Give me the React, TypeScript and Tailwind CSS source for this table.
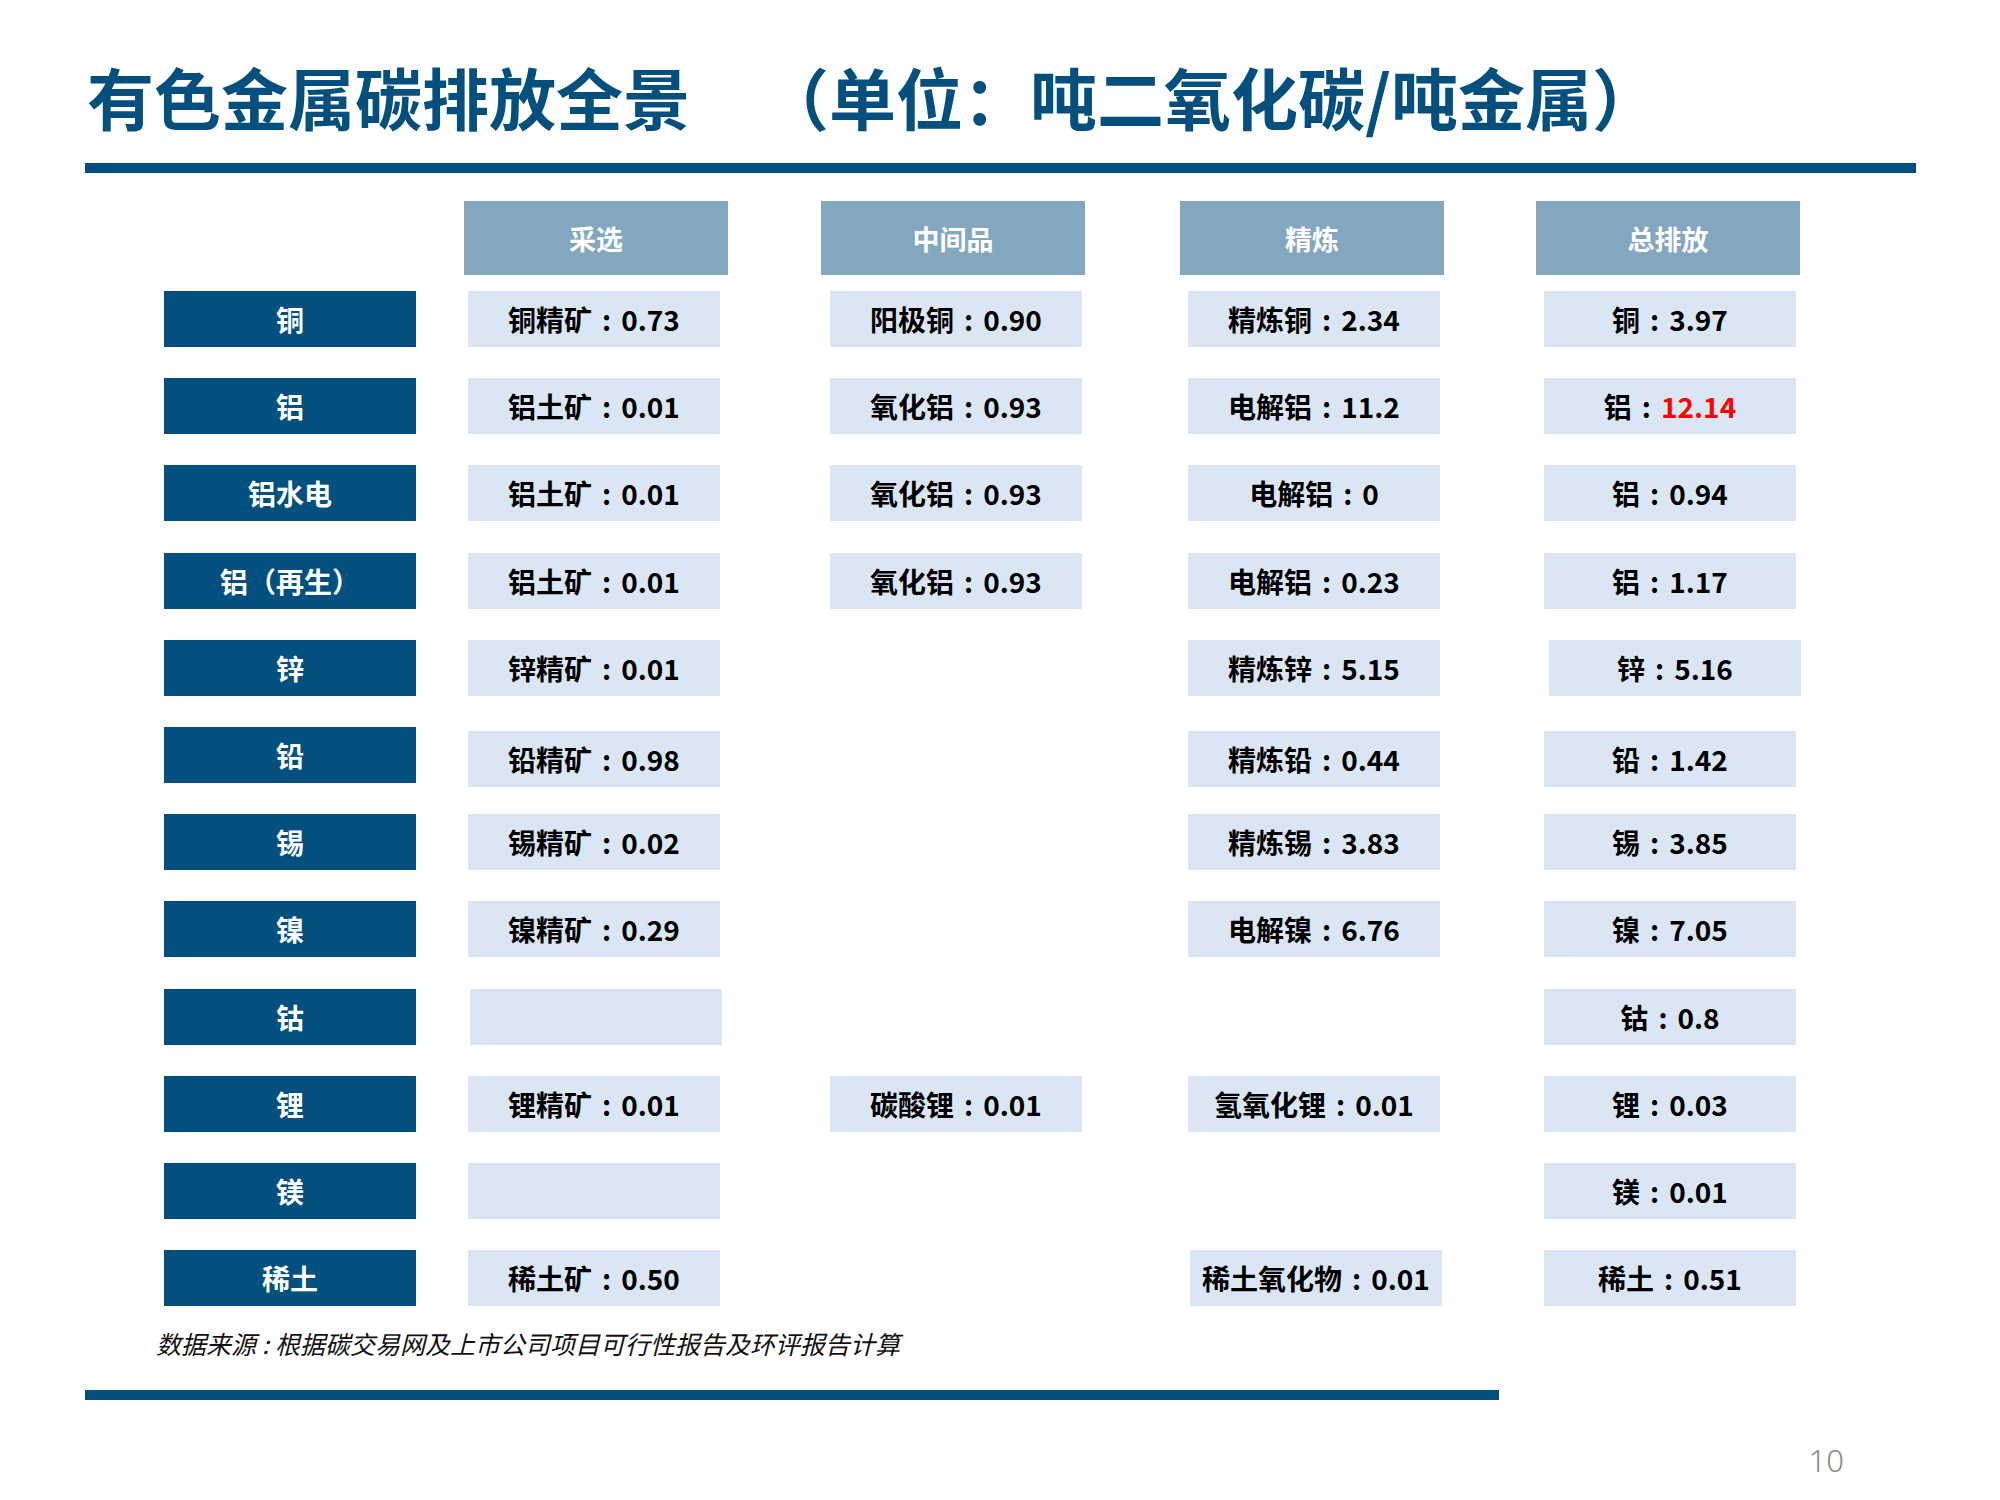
import React from "react";
import clsx from "clsx";

type Item = { k: string; v: string; red?: boolean; empty?: boolean; cls?: string } | null;

type Row = {
  name: string;
  cells: [Item, Item, Item, Item];
  rowCls?: string;
};

const ROWS: Row[] = [
  {
    name: "铜",
    cells: [
      { k: "铜精矿", v: "0.73" },
      { k: "阳极铜", v: "0.90" },
      { k: "精炼铜", v: "2.34" },
      { k: "铜", v: "3.97" },
    ],
  },
  {
    name: "铝",
    cells: [
      { k: "铝土矿", v: "0.01" },
      { k: "氧化铝", v: "0.93" },
      { k: "电解铝", v: "11.2" },
      { k: "铝", v: "12.14", red: true },
    ],
  },
  {
    name: "铝水电",
    cells: [
      { k: "铝土矿", v: "0.01" },
      { k: "氧化铝", v: "0.93" },
      { k: "电解铝", v: "0" },
      { k: "铝", v: "0.94" },
    ],
  },
  {
    name: "铝（再生）",
    cells: [
      { k: "铝土矿", v: "0.01" },
      { k: "氧化铝", v: "0.93" },
      { k: "电解铝", v: "0.23" },
      { k: "铝", v: "1.17" },
    ],
  },
  {
    name: "锌",
    cells: [
      { k: "锌精矿", v: "0.01" },
      null,
      { k: "精炼锌", v: "5.15" },
      { k: "锌", v: "5.16", cls: "ml-[109px]" },
    ],
  },
  {
    name: "铅",
    rowCls: "mt-[4px]",
    cells: [
      { k: "铅精矿", v: "0.98" },
      null,
      { k: "精炼铅", v: "0.44" },
      { k: "铅", v: "1.42" },
    ],
  },
  {
    name: "锡",
    cells: [
      { k: "锡精矿", v: "0.02" },
      null,
      { k: "精炼锡", v: "3.83" },
      { k: "锡", v: "3.85" },
    ],
  },
  {
    name: "镍",
    cells: [
      { k: "镍精矿", v: "0.29" },
      null,
      { k: "电解镍", v: "6.76" },
      { k: "镍", v: "7.05" },
    ],
  },
  {
    name: "钴",
    cells: [
      { k: "", v: "", empty: true, cls: "ml-[54px]" },
      null,
      null,
      { k: "钴", v: "0.8", cls: "ml-[102px]" },
    ],
  },
  {
    name: "锂",
    cells: [
      { k: "锂精矿", v: "0.01" },
      { k: "碳酸锂", v: "0.01" },
      { k: "氢氧化锂", v: "0.01" },
      { k: "锂", v: "0.03" },
    ],
  },
  {
    name: "镁",
    cells: [{ k: "", v: "", empty: true }, null, null, { k: "镁", v: "0.01" }],
  },
  {
    name: "稀土",
    cells: [
      { k: "稀土矿", v: "0.50" },
      null,
      { k: "稀土氧化物", v: "0.01", cls: "ml-[108px]" },
      { k: "稀土", v: "0.51", cls: "ml-[102px]" },
    ],
  },
];

// left margin of each data column, measured from the end of the previous box
const GAPS = ["ml-[52px]", "ml-[110px]", "ml-[106px]", "ml-[104px]"];
const HEADERS = ["采选", "中间品", "精炼", "总排放"];
const HEADER_GAPS = ["ml-0", "ml-[93px]", "ml-[95px]", "ml-[92px]"];

function Cell({ item, col, rowCls }: { item: Item; col: number; rowCls?: string }) {
  if (item === null) {
    return <div className={clsx(GAPS[col], "w-[252px] shrink-0")} />;
  }
  if (item.empty) {
    return (
      <div
        className={clsx(item.cls || GAPS[col], "w-[252px] h-[56px] shrink-0 bg-[#dae6f4]", rowCls)}
      />
    );
  }
  return (
    <div
      className={clsx(
        item.cls || GAPS[col],
        "flex w-[252px] h-[56px] shrink-0 items-center justify-center bg-[#dae6f4]",
        "text-[28px] font-bold leading-none text-black",
        rowCls
      )}
    >
      <span>{item.k}</span>
      <span className="mx-[10px]">:</span>
      <span className={clsx(item.red && "text-[#ff0000]")}>{item.v}</span>
    </div>
  );
}

export default function App() {
  return (
    <div className="w-[2000px] h-[1500px] bg-white font-['Noto_Sans_CJK_SC',sans-serif] overflow-hidden">
      <div className="pt-[62px] pl-[87px] h-[128px]">
        <h1 className="text-[67px] font-bold leading-none text-[#03507f] whitespace-nowrap">
          有色金属碳排放全景
          <span className="ml-[72px]">（单位：吨二氧化碳/吨金属）</span>
        </h1>
      </div>
      <div className="mt-[35px] ml-[85px] w-[1831px] h-[10px] bg-[#03507f]" />

      <div className="mt-[28px] pl-[464px] flex">
        {HEADERS.map((h, i) => (
          <div
            key={h}
            className={clsx(
              HEADER_GAPS[i],
              "flex w-[264px] h-[74px] shrink-0 items-center justify-center bg-[#84a7c0]",
              "text-[27px] font-bold leading-none text-white"
            )}
          >
            {h}
          </div>
        ))}
      </div>

      <div className="mt-[16px] flex flex-col gap-y-[31.2px]">
        {ROWS.map((r) => (
          <div key={r.name} className="flex items-start h-[56px] pl-[164px]">
            <div className="flex w-[252px] h-[56px] shrink-0 items-center justify-center bg-[#02507f] text-[28px] font-bold leading-none text-white">
              {r.name}
            </div>
            {r.cells.map((c, i) => (
              <Cell key={i} item={c} col={i} rowCls={r.rowCls} />
            ))}
          </div>
        ))}
      </div>

      <p className="mt-[25px] pl-[156px] text-[25px] italic leading-none text-[#111]">
        数据来源
        <span className="mx-[6px]">:</span>
        根据碳交易网及上市公司项目可行性报告及环评报告计算
      </p>
      <div className="mt-[34px] ml-[85px] w-[1414px] h-[10px] bg-[#03507f]" />
      <div className="mt-[45px] pr-[156px] text-right font-['Noto_Sans',sans-serif] text-[31px] font-light leading-none text-[#8a8a8a]">
        10
      </div>
    </div>
  );
}
